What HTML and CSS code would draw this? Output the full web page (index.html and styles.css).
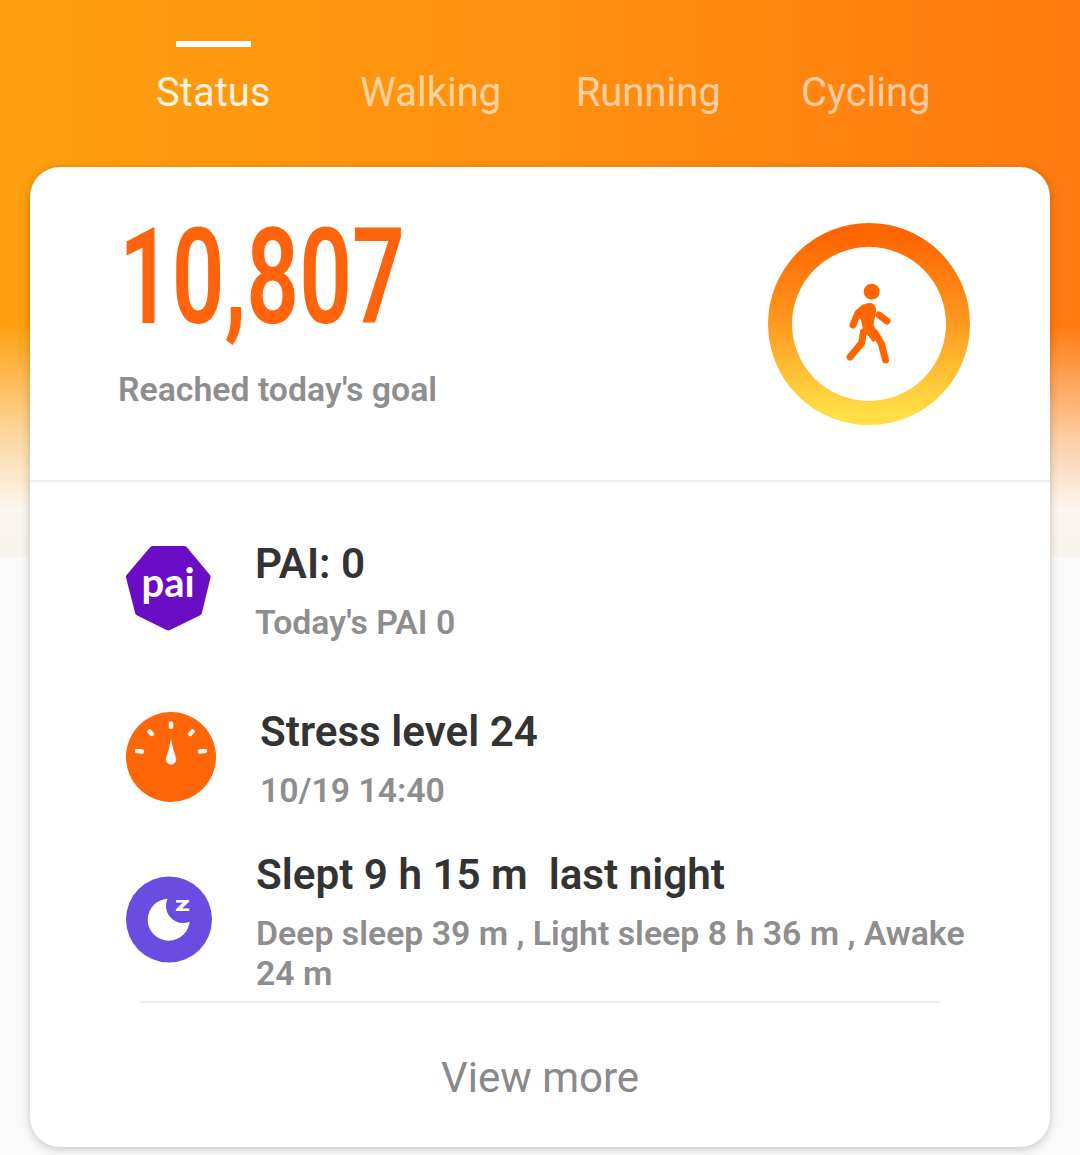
FILE: index.html
```html
<!DOCTYPE html>
<html>
<head>
	<title>Status</title>
	<link rel="stylesheet" href="styles.css">
</head>

<body>

<div class="tabBar">
	<div class="tab tabActive">Status</div>
	<div class="tab">Walking</div>
	<div class="tab">Running</div>
	<div class="tab">Cycling</div>
</div>

<div class="card">
	<div class="summary">
		<div>
			<div class="stepCount"><span>10,807</span></div>
			<div class="stepGoal">Reached today's goal</div>
		</div>
		<svg class="stepRing" width="202" height="202" viewBox="0 0 202 202">
			<defs>
				<linearGradient id="ringFade" x1="0" y1="0" x2="0" y2="1">
					<stop offset="0" stop-color="#ff6500"/>
					<stop offset="0.5" stop-color="#ff9a20"/>
					<stop offset="1" stop-color="#ffdf45"/>
				</linearGradient>
			</defs>
			<circle cx="101" cy="101" r="89" fill="none" stroke="url(#ringFade)" stroke-width="24"/>
			<circle cx="103.700" cy="68.700" r="8" fill="#ff6600"/>
			<path d="M88 90 L98 80.500 Q108 78 108 88 L105.500 102 L112 114 L105 119 L95 106 L93 97 Z" fill="#ff6600"/>
			<path class="walker" d="M96 85 L90 90 L85 102"/>
			<path class="walker" d="M111 92 L119 98"/>
			<path class="walker" d="M107 110 L113.500 121 L117.500 137"/>
			<path class="walker" d="M95.500 109 L93.700 120 L82 134"/>
		</svg>
	</div>

	<div class="metricList">
		<div class="metric metricPai">
			<svg class="metricIcon" width="85" height="85" viewBox="0 0 85 85">
				<polygon points="27,4 58,4 80.500,31 72,66 42.300,80.500 13,66 4,31" fill="#6a0dc4" stroke="#6a0dc4" stroke-width="8" stroke-linejoin="round"/>
				<text x="42" y="51" text-anchor="middle" class="paiLogo">pai</text>
			</svg>
			<div class="metricText">
				<div class="metricTitle">PAI: 0</div>
				<div class="metricSub">Today's PAI 0</div>
			</div>
		</div>

		<div class="metric metricStress">
			<svg class="metricIcon" width="90" height="90" viewBox="0 0 90 90">
				<circle cx="45" cy="45" r="45" fill="#ff6608"/>
				<g stroke="#fff" stroke-width="4.500" stroke-linecap="round" opacity="0.95">
					<path d="M45 11.500 L45 15"/>
					<path d="M23.500 19.500 L26 22"/>
					<path d="M66.500 19.500 L64 22"/>
					<path d="M11 39 L16 39.500"/>
					<path d="M79 39 L74 39.500"/>
				</g>
				<path d="M45 27 Q47 38 50 46 A5.200 5.200 0 1 1 40 46 Q43 38 45 27 Z" fill="#fff"/>
			</svg>
			<div class="metricText">
				<div class="metricTitle">Stress level 24</div>
				<div class="metricSub">10/19 14:40</div>
			</div>
		</div>

		<div class="metric metricSleep">
			<svg class="metricIcon" width="86" height="87" viewBox="0 0 86 87">
				<circle cx="43" cy="43.500" r="43" fill="#6a4ce0"/>
				<circle cx="42.700" cy="43.700" r="21" fill="#fff"/>
				<circle cx="57" cy="30" r="17" fill="#6a4ce0"/>
				<text x="49" y="35" textLength="15" lengthAdjust="spacingAndGlyphs" class="sleepZ">z</text>
			</svg>
			<div class="metricText">
				<div class="metricTitle">Slept 9 h 15 m&nbsp; last night</div>
				<div class="metricSub">Deep sleep 39 m , Light sleep 8 h 36 m , Awake 24 m</div>
			</div>
		</div>
	</div>

	<div class="viewMore">View more</div>
</div>

</body>
</html>
```

FILE: styles.css
```css
html, body {margin: 0;padding: 0;}

body {
	width: 1080px;
	height: 1155px;
	overflow: hidden;
	font-family: Roboto, Arial, sans-serif;
	background-color: #fafafa;
	background-image:
		linear-gradient(to bottom, rgba(250,246,240,0) 325px, rgba(251,236,215,0.75) 440px, #fbf6f0 510px, #faf4ee 557px, #fafafa 557px),
		linear-gradient(to right, #ffa00e 0, #ff9010 50%, #ff7a10 100%);
	background-size: 100% 557px;
	background-repeat: no-repeat;
}

.tabBar {
	display: grid;
	grid-template-columns: repeat(4, 217.5px);
	height: 167px;
	padding-left: 104.500px;
}

.tab {
	padding-top: 68px;
	font-size: 40px;
	line-height: 50px;
	text-align: center;
	color: rgba(255,255,255,0.6);
}

.tabActive {color: rgba(255,255,255,0.88);position: relative;}

.tabActive::before {
	content: "";
	position: absolute;
	top: 41px;
	left: 71.500px;
	width: 75px;
	height: 6px;
	background: #fff;
}

.card {
	width: 1020px;
	height: 980px;
	margin-left: 30px;
	background: #fff;
	border-radius: 30px;
	box-shadow: 0 2px 10px rgba(0,0,0,0.22);
	display: flex;
	flex-direction: column;
}

.summary {
	height: 313px;
	flex: none;
	display: flex;
	justify-content: space-between;
	padding-right: 80px;
	border-bottom: 2px solid #eeeeee;
}

.stepCount {
	height: 192px;
	padding-left: 89px;
	font-size: 133px;
	line-height: 222px;
	font-weight: 600;
	color: #ff640c;
}

.stepCount span {display: inline-block;transform: scaleX(0.695);transform-origin: left center;}

.stepGoal {
	padding-left: 88px;
	padding-top: 1px;
	font-size: 33.800px;
	line-height: 60px;
	font-weight: 600;
	color: #8e8e8e;
}

.stepRing {margin-top: 56px;flex: none;}

.walker {fill: none;stroke: #ff6600;stroke-width: 7;stroke-linecap: round;stroke-linejoin: round;}

.metricList {padding: 58px 80px 0 96px;flex: none;height: 519px;box-sizing: border-box;}

.metric {display: flex;align-items: flex-start;}

.metricIcon {flex: none;margin-right: 44px;}

.metricTitle {font-size: 42.200px;line-height: 48px;font-weight: 600;color: #333;}

.metricSub {margin-top: 15px;margin-bottom: -1px;font-size: 33.800px;line-height: 40px;font-weight: 600;color: #8e8e8e;}

.metricPai .metricIcon {margin-top: 6px;}
.metricStress {margin-top: 66px;}
.metricStress .metricIcon {margin-top: 4px;}
.metricSleep {margin-top: 41px;}
.metricSleep .metricIcon {margin-top: 25px;}

.paiLogo {font-family: Lato, Roboto, sans-serif;font-size: 40px;font-weight: 700;fill: #fff;}
.sleepZ {font-family: Roboto, sans-serif;font-size: 20px;font-weight: 900;fill: #fff;}

.viewMore {
	flex: 1;
	margin: 0 110px;
	border-top: 2px solid #eeeeee;
	display: flex;
	align-items: center;
	justify-content: center;
	font-size: 42px;
	color: #8a8a8a;
	padding-top: 4px;
}
```
